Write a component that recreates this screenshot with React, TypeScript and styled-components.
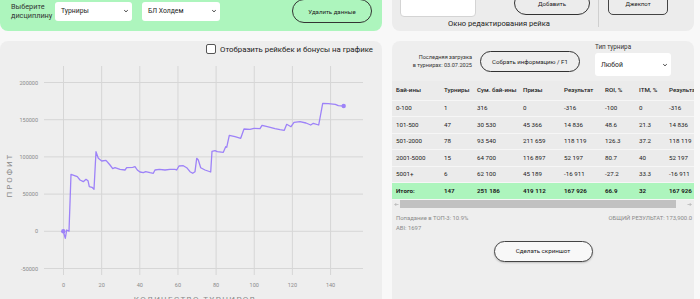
import React from 'react';
import styled, { createGlobalStyle } from 'styled-components';

const GlobalStyle = createGlobalStyle`
	html, body {
		margin: 0;
		padding: 0;
		overflow: hidden;
		background: #f8f8f8;
		font-family: Roboto, "Noto Sans", sans-serif;
		color: #222;
	}
`;

const points = [
	[63.3, 231.3], [65.3, 238.3], [66.7, 230], [69, 231.3], [71, 174.3], [77.3, 176.7], [80, 180],
	[83.3, 181.7], [86, 179.3], [88, 180.7], [89.3, 186.7], [92, 187.3], [94, 189.3], [96, 151.7],
	[98.3, 158.3], [101.7, 161], [106, 160.3], [110, 165], [112.7, 168.7], [115, 167.7], [120, 169.3],
	[125, 170], [126.7, 167.7], [132.7, 167.3], [135, 166.7], [137.3, 170], [140, 172], [143.3, 172.7],
	[145.7, 171.7], [150, 172.7], [153.3, 173.3], [155, 170], [159.3, 169.3], [165, 170], [170, 169.3],
	[175, 169.3], [176.7, 170], [179, 166], [183.3, 165.7], [186.7, 167.7], [190, 171.7], [192.7, 173.3],
	[195, 171.7], [196.7, 158.3], [198.3, 160], [200.7, 167.7], [205, 170], [210.7, 172], [212, 151.3],
	[215, 150.7], [217.3, 151.7], [223.3, 152.3], [225.7, 146.7], [226.7, 147.3], [229.3, 135.3],
	[235, 136.7], [240.7, 138.3], [244, 129], [250, 129.3], [254, 128.3], [260, 128.7], [262, 125.3],
	[267.3, 126.7], [275, 128.7], [280, 129.7], [284.3, 130.3], [286.7, 124.3], [291, 126.7], [294, 122.3],
	[300, 121.7], [306, 123], [310.7, 125], [313.3, 123.3], [318.7, 125], [322.7, 103.3], [328.3, 103.7],
	[335.3, 104.3], [338.3, 105.7], [343.7, 106],
];

const yTicks = [200000, 150000, 100000, 50000, 0, -50000];
const xTicks = [0, 20, 40, 60, 80, 100, 120, 140];
const yOf = v => 231.3 - (v / 50000) * 37.2;
const xOf = v => 63.5 + (v / 20) * 38.15;

const rows = [
	['0-100', '1', '316', '0', '-316', '-100', '0', '-316'],
	['101-500', '47', '30 530', '45 366', '14 836', '48.6', '21.3', '14 836'],
	['501-2000', '78', '93 540', '211 659', '118 119', '126.3', '37.2', '118 119'],
	['2001-5000', '15', '64 700', '116 897', '52 197', '80.7', '40', '52 197'],
	['5001+', '6', '62 100', '45 189', '-16 911', '-27.2', '33.3', '-16 911'],
];
const total = ['Итого:', '147', '251 186', '419 112', '167 926', '66.9', '32', '167 926'];
const heads = ['Бай-ины', 'Турниры', 'Сум. бай-ины', 'Призы', 'Результат', 'ROI, %', 'ITM, %', 'Результат'];
const colWidths = [48, 33, 46, 41, 41, 34, 30, 45];

const Chevron = () => (
	<svg width="6" height="4" viewBox="0 0 6 4">
		<path d="M1.2 1.2 L3 2.8 L4.8 1.2" fill="none" stroke="#333" strokeWidth="0.9" />
	</svg>
);

export default function App() {
	const line = points.map(p => p.join(',')).join(' ');
	return (
		<>
			<GlobalStyle />
			<Page>
				<DisciplineBar>
					<ControlsRow>
						<FieldLabel>Выберите<br />дисциплину</FieldLabel>
						<FakeSelect $width={77}>Турниры<Chevron /></FakeSelect>
						<FakeSelect $width={78}>БЛ Холдем<Chevron /></FakeSelect>
						<PillButton $width={80} $height={24} $push>Удалить данные</PillButton>
					</ControlsRow>
				</DisciplineBar>

				<RakePanel>
					<RakeEditor>
						<EditorRow>
							<RakeInput />
							<PillButton $width={76} $height={24} style={{ marginBottom: 2 }}>Добавить</PillButton>
						</EditorRow>
						<Caption>Окно редактирования рейка</Caption>
					</RakeEditor>
					<Divider />
					<JackpotButton>Джекпот</JackpotButton>
				</RakePanel>

				<ChartCard>
					<ToggleRow>
						<CheckBox />
						<ToggleText>Отобразить рейкбек и бонусы на графике</ToggleText>
					</ToggleRow>
					<svg width="382" height="245" viewBox="0 57 382 245">
						{xTicks.map(t => (
							<line key={'x' + t} x1={xOf(t)} x2={xOf(t)} y1={66} y2={275} stroke="#d6d6d6" strokeWidth="1" />
						))}
						{yTicks.map(t => (
							<line key={'y' + t} x1={44} x2={363} y1={yOf(t)} y2={yOf(t)} stroke="#d6d6d6" strokeWidth="1" />
						))}
						{yTicks.map(t => (
							<text key={'yl' + t} x={38} y={yOf(t) + 2} textAnchor="end" fontSize="5.5" fill="#8a8a8a">{t}</text>
						))}
						{xTicks.map(t => (
							<text key={'xl' + t} x={xOf(t)} y={287} textAnchor="middle" fontSize="5.5" fill="#8a8a8a">{t}</text>
						))}
						<text x={12} y={175} transform="rotate(-90 12 175)" textAnchor="middle" fontSize="8" letterSpacing="2" fill="#8a8a8a">ПРОФИТ</text>
						<text x={195} y={302} textAnchor="middle" fontSize="8" letterSpacing="1.4" fill="#8a8a8a">КОЛИЧЕСТВО ТУРНИРОВ</text>
						<polyline points={line} fill="none" stroke="#9d82f8" strokeWidth="1.3" strokeLinejoin="round" />
						<circle cx={63.3} cy={231.3} r={2.2} fill="#9d82f8" />
						<circle cx={343.7} cy={106} r={2.2} fill="#9d82f8" />
					</svg>
				</ChartCard>

				<StatsCard>
					<LoadRow>
						<LoadInfo>Последняя загрузка<br />в турнирах: 03.07.2025</LoadInfo>
						<PillButton $width={100} $height={21}>Собрать информацию / F1</PillButton>
						<TypeGroup>
							<TypeLabel>Тип турнира</TypeLabel>
							<FakeSelect $width={76} $height={23}>Любой<Chevron /></FakeSelect>
						</TypeGroup>
					</LoadRow>
					<TableScroll>
						<StatsTable>
							<colgroup>
								{colWidths.map((w, i) => <col key={i} style={{ width: w }} />)}
							</colgroup>
							<thead>
								<tr>{heads.map((h, i) => <Th key={i}>{h}</Th>)}</tr>
							</thead>
							<tbody>
								{rows.map((r, i) => (
									<tr key={i}>{r.map((c, j) => <Td key={j}>{c}</Td>)}</tr>
								))}
								<TotalRow>{total.map((c, j) => <Td key={j}>{c}</Td>)}</TotalRow>
							</tbody>
						</StatsTable>
					</TableScroll>
					<ScrollBar>
						<ScrollArrow>
							<svg width="5" height="5" viewBox="0 0 5 5"><path d="M4.5 2.5H0.8M2.3 1L0.8 2.5L2.3 4" fill="none" stroke="#b0b0b0" strokeWidth="0.7" /></svg>
						</ScrollArrow>
						<ScrollThumb />
						<ScrollArrow>
							<svg width="5" height="5" viewBox="0 0 5 5"><path d="M0.5 2.5H4.2M2.7 1L4.2 2.5L2.7 4" fill="none" stroke="#b0b0b0" strokeWidth="0.7" /></svg>
						</ScrollArrow>
					</ScrollBar>
					<StatsFooter>
						<FooterLine>
							<span>Попадание в ТОП-3: 10.9%</span>
							<span>ОБЩИЙ РЕЗУЛЬТАТ: 173,900.0</span>
						</FooterLine>
						<FooterLine>
							<span>ABI: 1697</span>
						</FooterLine>
					</StatsFooter>
					<ShotButton>Сделать скриншот</ShotButton>
				</StatsCard>
			</Page>
		</>
	);
}

const Page = styled.div`
	display: grid;
	grid-template-columns: 382px 302px;
	grid-template-rows: 51px 300px;
	column-gap: 10px;
	row-gap: 10px;
	margin-top: -20px;
`;

const DisciplineBar = styled.div`
	background: #adf5bd;
	border-radius: 0 0 8px 8px;
	display: flex;
	align-items: flex-end;
	padding: 0 10px 8px 11px;
`;

const ControlsRow = styled.div`
	display: flex;
	align-items: center;
	width: 100%;
	height: 24px;
`;

const FieldLabel = styled.div`
	font-size: 7.3px;
	line-height: 9px;
	color: #333;
	width: 44px;
`;

const FakeSelect = styled.div<{ $width: number; $height?: number }>`
	width: ${p => p.$width}px;
	height: ${p => p.$height || 19}px;
	box-sizing: border-box;
	background: #fff;
	border-radius: 3px;
	display: flex;
	align-items: center;
	justify-content: space-between;
	padding: 0 3px 0 6px;
	font-size: 6.8px;
	color: #222;
	margin-right: 10px;
`;

const PillButton = styled.div<{ $width: number; $height: number; $push?: boolean }>`
	width: ${p => p.$width}px;
	height: ${p => p.$height}px;
	box-sizing: border-box;
	border: 1px solid #333;
	border-radius: 12px;
	display: flex;
	align-items: center;
	justify-content: center;
	font-size: 6.1px;
	color: #222;
	margin-left: ${p => (p.$push ? 'auto' : '0')};
	flex-shrink: 0;
`;

const RakePanel = styled.div`
	background: #ececec;
	border-radius: 0 0 8px 8px;
	display: flex;
	align-items: flex-end;
	padding: 0 0 2px 8px;
`;

const RakeEditor = styled.div`
	width: 190px;
	display: flex;
	flex-direction: column;
	align-items: center;
`;

const EditorRow = styled.div`
	display: flex;
	align-items: flex-end;
	justify-content: space-between;
	width: 100%;
`;

const RakeInput = styled.div`
	width: 76px;
	height: 24px;
	box-sizing: border-box;
	background: #fff;
	border: 1px solid #d4d4d4;
	border-radius: 4px;
`;

const Caption = styled.div`
	font-size: 7.6px;
	line-height: 11px;
	margin-top: 1px;
	color: #222;
	padding-left: 8px;
`;

const Divider = styled.div`
	width: 1px;
	align-self: stretch;
	background: #cfcfcf;
	margin: 0 0 2px 8px;
`;

const JackpotButton = styled.div`
	width: 60px;
	height: 24px;
	box-sizing: border-box;
	border: 1px solid #444;
	border-radius: 5px;
	display: flex;
	align-items: center;
	justify-content: center;
	font-size: 6px;
	margin: 0 0 14px 9px;
`;

const ChartCard = styled.div`
	background: #eeeeee;
	border-radius: 8px 8px 0 0;
	display: flex;
	flex-direction: column;
	overflow: hidden;
`;

const ToggleRow = styled.div`
	display: flex;
	align-items: center;
	justify-content: flex-end;
	height: 16px;
	padding: 0 9px 0 0;
`;

const CheckBox = styled.div`
	width: 10px;
	height: 10px;
	box-sizing: border-box;
	border: 1px solid #555;
	border-radius: 2px;
	background: #fff;
	margin-right: 4px;
`;

const ToggleText = styled.span`
	font-size: 7.8px;
	color: #222;
`;

const StatsCard = styled.div`
	background: #eeeeee;
	border-radius: 8px 8px 0 0;
	display: flex;
	flex-direction: column;
	overflow: hidden;
`;

const LoadRow = styled.div`
	display: flex;
	align-items: center;
	height: 40px;
	padding-left: 8px;
	gap: 8px;
`;

const LoadInfo = styled.div`
	width: 72px;
	text-align: right;
	font-size: 5.6px;
	line-height: 8px;
	color: #333;
`;

const TypeGroup = styled.div`
	display: flex;
	flex-direction: column;
	margin-left: 7px;
	margin-top: -4px;
`;

const TypeLabel = styled.div`
	font-size: 6.3px;
	line-height: 10px;
	color: #333;
	margin-bottom: 1px;
`;

const TableScroll = styled.div`
	overflow: hidden;
	width: 100%;
`;

const StatsTable = styled.table`
	border-collapse: collapse;
	table-layout: fixed;
	width: 318px;
	background: #ebebeb;
	font-size: 6.2px;
	color: #222;
	tr {
		border-bottom: 1px solid #f6f6f6;
	}
	thead tr {
		height: 19px;
	}
	tbody tr {
		height: 16.5px;
	}
`;

const Th = styled.th`
	text-align: left;
	font-weight: 500;
	padding: 0 0 0 4px;
	white-space: nowrap;
	overflow: hidden;
`;

const Td = styled.td`
	padding: 0 0 0 4px;
	white-space: nowrap;
	overflow: hidden;
`;

const TotalRow = styled.tr`
	background: #adf5bd;
	font-weight: 700;
`;

const ScrollBar = styled.div`
	display: flex;
	align-items: center;
	height: 9px;
	padding: 0 1px;
`;

const ScrollArrow = styled.div`
	width: 7px;
	display: flex;
	justify-content: center;
`;

const ScrollThumb = styled.div`
	flex: 1;
	height: 8px;
	background: #c1c1c1;
	margin-right: 10px;
`;

const StatsFooter = styled.div`
	padding: 4px 2px 0 4px;
	font-size: 5.9px;
	line-height: 10.5px;
	color: #8a8a8a;
`;

const FooterLine = styled.div`
	display: flex;
	justify-content: space-between;
`;

const ShotButton = styled.div`
	align-self: center;
	width: 99px;
	height: 21px;
	box-sizing: border-box;
	margin-top: 7px;
	border: 1px solid #444;
	border-radius: 12px;
	background: #f8f8f8;
	box-shadow: 0 1px 2px rgba(0, 0, 0, 0.2);
	display: flex;
	align-items: center;
	justify-content: center;
	font-size: 6.2px;
	color: #222;
`;
